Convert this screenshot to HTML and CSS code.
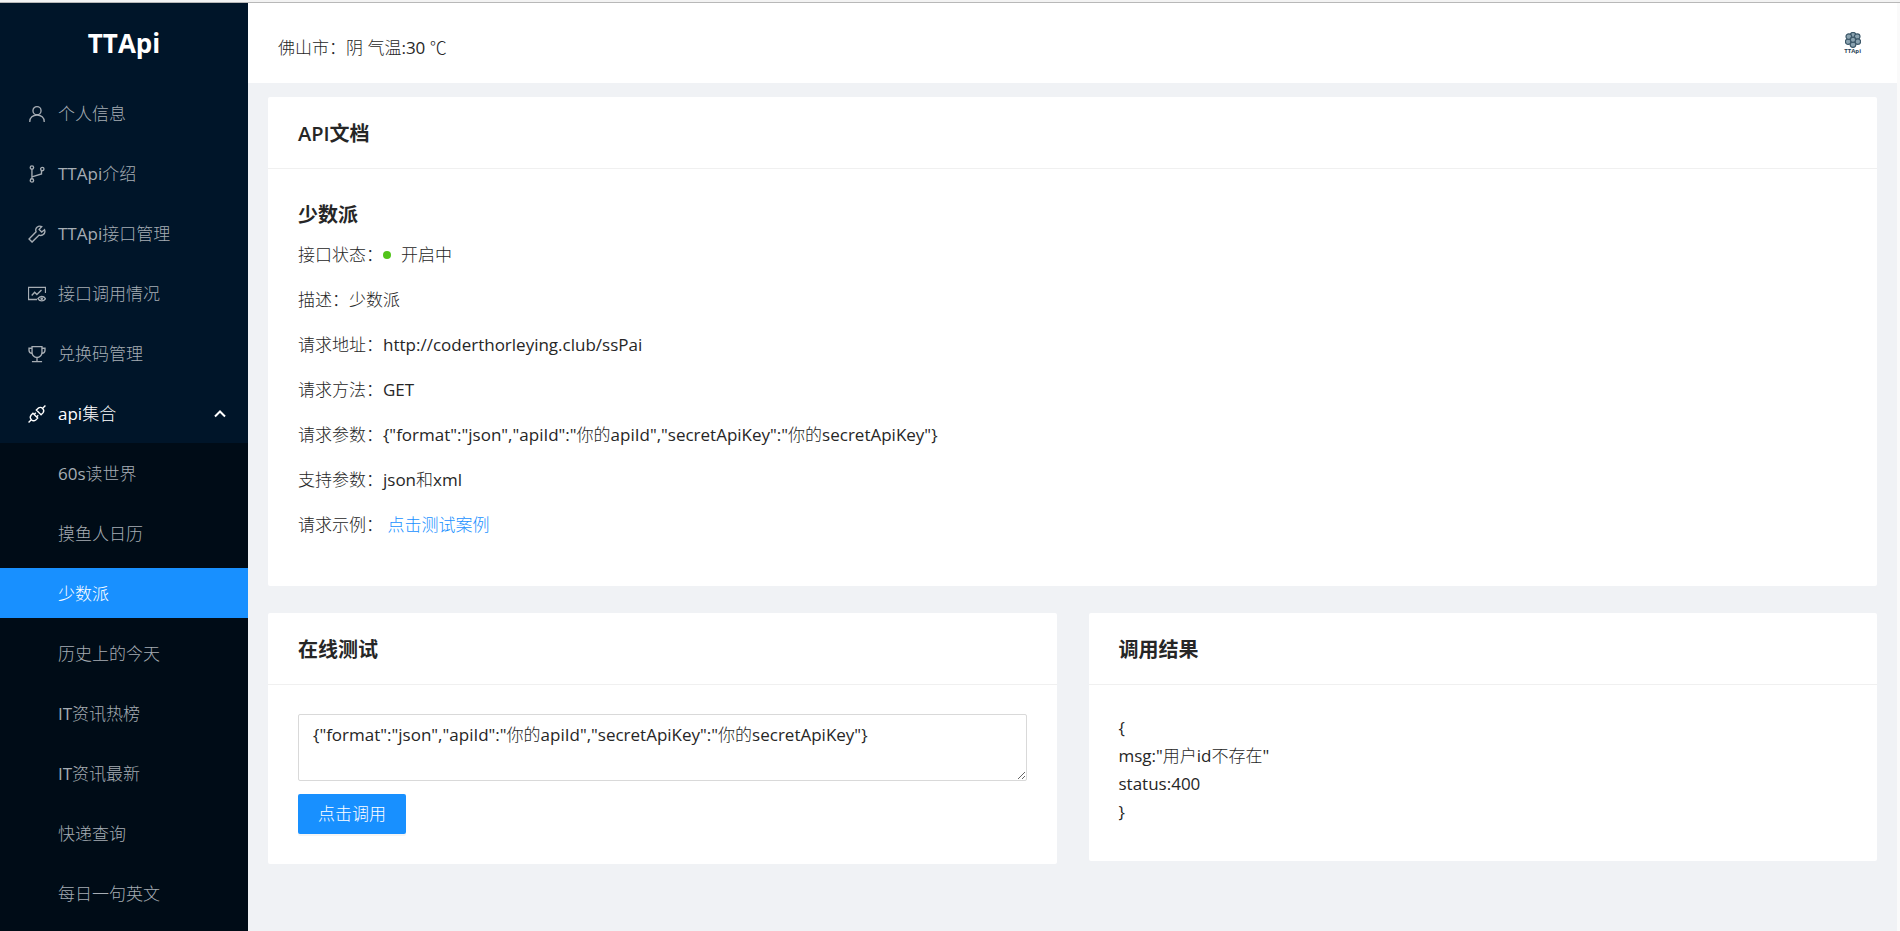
FILE: index.html
```html
<!DOCTYPE html>
<html lang="zh-CN">
<head>
<meta charset="utf-8">
<title>TTApi</title>
<link rel="stylesheet" href="styles.css">
</head>
<body>
<div class="layout">
  <aside class="sider">
    <h1 class="brand">TTApi</h1>
    <nav>
      <ul class="menu">
        <li><a class="item" href="#profile"><svg class="icon" viewBox="0 0 16 16"><circle cx="8" cy="5" r="3.6"/><path d="M1.600 15v-.4C1.600 11.400 4.300 8.900 8 8.900s6.400 2.500 6.400 5.700v.4"/></svg>个人信息</a></li>
        <li><a class="item" href="#intro"><svg class="icon" viewBox="0 0 16 16"><circle cx="3.500" cy="2.300" r="1.500"/><circle cx="3.500" cy="13.700" r="1.500"/><circle cx="12.700" cy="3.600" r="1.500"/><path d="M3.500 3.800v8.400M3.500 10.500L12 8V5.100"/></svg>TTApi介绍</a></li>
        <li><a class="item" href="#manage"><svg class="icon" viewBox="0 0 16 16"><path d="M14.700 4.200l-2.500 2-2.300-2.300 2.300-2.500C10.300.4 8 1.200 7.200 3c-.5 1-.4 2 0 3L.9 12.500l2.700 2.700L9.900 9c1 .4 2.200.4 3.200-.2 1.600-.9 2.300-2.800 1.600-4.600z"/></svg>TTApi接口管理</a></li>
        <li><a class="item" href="#usage"><svg class="icon" viewBox="0 0 16 16"><path d="M8 12.900H.4V2.100h15.200v5M3.300 9.400l2.600-2.900 2 2L12 4.500"/><path d="M8.800 12.200c1.700-2.600 5.100-2.600 6.800 0-1.700 2.600-5.100 2.600-6.800 0z"/><circle cx="12.200" cy="12.200" r=".6"/></svg>接口调用情况</a></li>
        <li><a class="item" href="#redeem"><svg class="icon" viewBox="0 0 16 16"><path d="M3.600 1.500h8.800v5.200a4.400 4.400 0 0 1-8.800 0zM3.600 2.900H.9v1.800c0 1.700 1.200 2.700 2.900 2.900M12.400 2.900h2.700v1.800c0 1.700-1.200 2.700-2.900 2.900M8 11.200v3.400M3.500 14.800h9"/></svg>兑换码管理</a></li>
        <li>
          <button class="item open" type="button" aria-expanded="true"><svg class="icon" viewBox="0 0 16 16"><path d="M7.400 4.500l1.700-1.700a3 3 0 0 1 4.200 4.200l-1.700 1.700zM4.400 7.400L2.700 9.100a3 3 0 0 0 4.200 4.200l1.700-1.700zM13.300 2.700L15.500.5M2.700 13.300L.5 15.500M5.400 8.400l1.500-1.500M7.600 10.600l1.500-1.500"/></svg>api集合<svg class="arrow" viewBox="0 0 12 8"><path d="M1 6.500l5-5 5 5"/></svg></button>
          <ul class="submenu">
            <li><a class="item" href="#60s">60s读世界</a></li>
            <li><a class="item" href="#moyu">摸鱼人日历</a></li>
            <li><a class="item selected" href="#sspai" aria-current="page">少数派</a></li>
            <li><a class="item" href="#history">历史上的今天</a></li>
            <li><a class="item" href="#ithot">IT资讯热榜</a></li>
            <li><a class="item" href="#itnew">IT资讯最新</a></li>
            <li><a class="item" href="#express">快递查询</a></li>
            <li><a class="item" href="#english">每日一句英文</a></li>
          </ul>
        </li>
      </ul>
    </nav>
  </aside>
  <div class="main">
    <header class="topbar">
      <span class="weather">佛山市：阴 气温:30 ℃</span>
      <a class="logo" href="#home" aria-label="TTApi">
        <svg class="flower" viewBox="0 0 16 16"><g class="petals"><circle cx="8" cy="3.200" r="2.800"/><circle cx="12.200" cy="4.600" r="2.800"/><circle cx="12.800" cy="9.600" r="2.800"/><circle cx="8" cy="12.600" r="2.800"/><circle cx="3.200" cy="9.600" r="2.800"/><circle cx="3.800" cy="4.600" r="2.800"/><circle cx="8" cy="7.800" r="2.600"/></g></svg>
        <span class="logo-text">TTApi</span>
      </a>
    </header>
    <main class="content">
      <section class="card">
        <h2 class="card-head">API文档</h2>
        <div class="card-body">
          <h3 class="name">少数派</h3>
          <p>接口状态：<span class="dot"></span>开启中</p>
          <p>描述：少数派</p>
          <p>请求地址：http://coderthorleying.club/ssPai</p>
          <p>请求方法：GET</p>
          <p>请求参数：{"format":"json","apiId":"你的apiId","secretApiKey":"你的secretApiKey"}</p>
          <p>支持参数：json和xml</p>
          <p>请求示例： <a class="link" href="#example">点击测试案例</a></p>
        </div>
      </section>
      <div class="row">
        <section class="card">
          <h2 class="card-head"><label for="params">在线测试</label></h2>
          <div class="card-body">
            <textarea id="params" class="params">{"format":"json","apiId":"你的apiId","secretApiKey":"你的secretApiKey"}</textarea>
            <button class="call" type="button">点击调用</button>
          </div>
        </section>
        <section class="card">
          <h2 class="card-head">调用结果</h2>
          <div class="card-body result">
            <div>{</div>
            <div>msg:"用户id不存在"</div>
            <div>status:400</div>
            <div>}</div>
          </div>
        </section>
      </div>
    </main>
  </div>
</div>
</body>
</html>
```
FILE: styles.css
```css
* {
  box-sizing: border-box;
}

body {
  margin: 0;
  background: #f0f2f5;
  color: #262626;
  font: 17px/28px "Open Sans", "Noto Sans CJK SC Light", "Noto Sans CJK SC", sans-serif;
}

body::before {
  content: "";
  display: block;
  height: 2px;
  border-bottom: 1px solid #b8b8b8;
  background: #f3f3f3;
}

h1, h2, h3, p, ul {
  margin: 0;
  padding: 0;
}

h2, h3 {
  font-family: "Open Sans", "Noto Sans CJK SC", sans-serif;
}

ul {
  list-style: none;
}

.layout {
  display: flex;
  min-height: calc(100vh - 3px);
}

.sider {
  flex: 0 0 248px;
  background: #001529;
}

.brand {
  height: 80px;
  color: #fff;
  font-size: 26px;
  line-height: 80px;
  text-align: center;
}

.menu li {
  padding: 5px 0;
}

.menu > li:last-child {
  padding-bottom: 0;
}

.item {
  display: flex;
  align-items: center;
  width: 100%;
  height: 50px;
  padding: 1px 22px 0 28px;
  border: 0;
  background: none;
  color: #a6adb4;
  font: inherit;
  text-decoration: none;
}

.item.open {
  color: #fff;
}

.icon {
  width: 18px;
  height: 18px;
  margin-right: 12px;
  fill: none;
  stroke: currentColor;
  stroke-width: 1.2;
}

.arrow {
  width: 12px;
  height: 8px;
  margin-left: auto;
  fill: none;
  stroke: currentColor;
  stroke-width: 2;
}

.submenu {
  margin-top: 5px;
  padding-bottom: 8px;
  background: #000c17;
}

.submenu .item {
  padding-left: 58px;
}

.submenu .selected {
  background: #1890ff;
  color: #fff;
}

.main {
  flex: 1;
  min-width: 0;
  border-right: 3px solid #fafafa;
}

.topbar {
  display: flex;
  align-items: center;
  justify-content: space-between;
  height: 80px;
  padding: 0 36px 0 30px;
  background: #fff;
}

.weather {
  padding-top: 9px;
}

.logo {
  display: flex;
  flex-direction: column;
  align-items: center;
  color: #2b4257;
  text-decoration: none;
}

.flower {
  width: 16px;
  height: 16px;
}

.petals {
  fill: #8ba3b0;
  stroke: #3d5869;
  stroke-width: 1.200;
}

.logo-text {
  font-size: 6px;
  font-weight: 700;
  line-height: 7px;
}

.content {
  padding: 14px 20px;
}

.card {
  border-radius: 2px;
  background: #fff;
}

.card-head {
  padding: 22px 30px 19px;
  border-bottom: 1px solid #f0f0f0;
  font-size: 20px;
  font-weight: 600;
  line-height: 30px;
}

.card-body {
  padding: 29px 30px 30px;
}

.name {
  margin-bottom: 10px;
  font-size: 20px;
  line-height: 33px;
}

.card-body p {
  margin-bottom: 17px;
}

.dot {
  display: inline-block;
  width: 8px;
  height: 8px;
  margin-right: 10px;
  border-radius: 50%;
  background: #52c41a;
  vertical-align: 2px;
}

.link {
  color: #1890ff;
  text-decoration: none;
}

.row {
  display: grid;
  grid-template-columns: 1fr 1fr;
  align-items: start;
  gap: 32px;
  margin-top: 27px;
}

.params {
  display: block;
  width: 100%;
  height: 67px;
  padding: 6px 14px;
  border: 1px solid #d9d9d9;
  border-radius: 2px;
  color: inherit;
  font: inherit;
}

.call {
  height: 40px;
  margin-top: 13px;
  padding: 0 20px;
  border: 0;
  border-radius: 2px;
  background: #1890ff;
  box-shadow: 0 2px 0 rgba(0, 0, 0, 0.04);
  color: #fff;
  font: inherit;
}

.result {
  min-height: 176px;
}
```
